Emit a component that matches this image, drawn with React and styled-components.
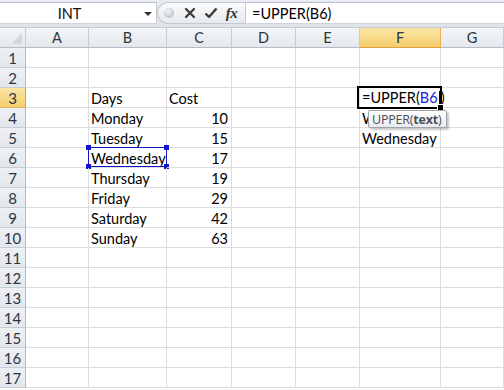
import React from "react";
import styled, { createGlobalStyle } from "styled-components";

const GlobalStyle = createGlobalStyle`
  html, body { margin: 0; padding: 0; background: #fff; overflow: hidden; }
  body { font-family: Lato, "Liberation Sans", sans-serif; }
`;

const Page = styled.div`
  width: 504px;
  height: 390px;
  overflow: hidden;
  background: #fff;
`;

const FormulaBar = styled.div`
  height: 28px;
  box-sizing: border-box;
  display: flex;
  align-items: flex-start;
  padding-top: 2px;
  background: linear-gradient(#e9ecf0, #dfe3e8);
  border-bottom: 1px solid #c6ccd4;
`;

const NameBox = styled.div`
  width: 157px;
  height: 22px;
  box-sizing: border-box;
  background: #fff;
  border-top: 1px solid #b8bfc8;
  border-bottom: 1px solid #d0d5db;
  border-right: 1px solid #c6ccd4;
  position: relative;
  display: flex;
  align-items: center;
  justify-content: center;
  padding-right: 17px;
  font-size: 14.5px;
  color: #111;
`;

const DropArrow = styled.span`
  position: absolute;
  right: 4px;
  top: 9px;
  width: 0;
  height: 0;
  border-left: 4px solid transparent;
  border-right: 4px solid transparent;
  border-top: 4px solid #333;
`;

const ButtonGroup = styled.div`
  width: 88px;
  height: 22px;
  box-sizing: border-box;
  display: flex;
  align-items: center;
  padding-right: 3px;
  border: 1px solid #c3c9d1;
  border-right: none;
  border-radius: 11px 0 0 11px;
  background: linear-gradient(#fafbfc, #e6e9ed);
`;

const IconSlot = styled.div`
  width: 21px;
  height: 20px;
  display: flex;
  align-items: center;
  justify-content: center;
`;

const Ball = styled.div`
  width: 10px;
  height: 10px;
  border-radius: 50%;
  background: radial-gradient(circle at 40% 35%, #f4f5f7, #c3c7cd 70%, #aeb3ba);
`;

const Fx = styled.span`
  font-family: "Liberation Serif", serif;
  font-style: italic;
  font-weight: bold;
  font-size: 15px;
  color: #333;
  letter-spacing: -0.5px;
`;

const FormulaInput = styled.div`
  flex: 1;
  height: 22px;
  box-sizing: border-box;
  background: #fff;
  border-top: 1px solid #b8bfc8;
  border-bottom: 1px solid #d0d5db;
  border-left: 1px solid #c3c9d1;
  display: flex;
  align-items: center;
  padding-left: 6px;
  font-size: 14.5px;
  color: #000;
`;

const Sheet = styled.div`
  display: grid;
  grid-template-columns: 26px 63px 78px 65px 64px 64px 81px 63px 1fr;
  grid-template-rows: 20px;
  grid-auto-rows: 20px;
`;

const Corner = styled.div`
  box-sizing: border-box;
  background: linear-gradient(#f3f5f7, #e4e8ec);
  border-right: 1px solid #c6ccd3;
  border-bottom: 1px solid #b5bcc5;
  position: relative;
  &::after {
    content: "";
    position: absolute;
    right: 3px;
    bottom: 3px;
    width: 0;
    height: 0;
    border-left: 11px solid transparent;
    border-bottom: 11px solid #d3d8de;
  }
`;

const ColHead = styled.div`
  box-sizing: border-box;
  display: flex;
  align-items: center;
  justify-content: center;
  font-size: 14.5px;
  color: #2c3642;
  border-right: 1px solid ${(p) => (p.$active ? "#e5b257" : "#c6ccd3")};
  border-bottom: 1px solid ${(p) => (p.$active ? "#e2a43a" : "#b5bcc5")};
  background: ${(p) =>
    p.$active
      ? "linear-gradient(#fbe6a6, #f5cd6b)"
      : "linear-gradient(#f3f5f7, #e4e8ec)"};
`;

const RowHead = styled.div`
  box-sizing: border-box;
  display: flex;
  align-items: center;
  justify-content: center;
  font-size: 15px;
  color: #2c3642;
  border-right: 1px solid ${(p) => (p.$active ? "#e2a43a" : "#b5bcc5")};
  border-bottom: 1px solid ${(p) => (p.$active ? "#e5b257" : "#c6ccd3")};
  background: ${(p) =>
    p.$active
      ? "linear-gradient(#fbe6a6, #f5cd6b)"
      : "linear-gradient(#eef1f4, #e3e7eb)"};
`;

const Cell = styled.div`
  box-sizing: border-box;
  position: relative;
  display: flex;
  align-items: center;
  justify-content: ${(p) => (p.$num ? "flex-end" : "flex-start")};
  padding: 1px 3px 0 2px;
  font-size: 14.5px;
  color: #000;
  white-space: nowrap;
  border-right: 1px solid #dadcdd;
  border-bottom: 1px solid #dadcdd;
  overflow: visible;
`;

const Selection = styled.div`
  position: absolute;
  left: -1px;
  top: -1px;
  right: -1px;
  bottom: 0px;
  border: 1px solid #1515c8;
  pointer-events: none;
`;

const Handle = styled.span`
  position: absolute;
  width: 5px;
  height: 5px;
  background: #1515c8;
  ${(p) => (p.$top ? "top: -3px;" : "bottom: -3px;")}
  ${(p) => (p.$left ? "left: -3px;" : "right: -3px;")}
`;

const EditBox = styled.div`
  position: absolute;
  left: -3px;
  top: -2px;
  right: -2px;
  bottom: -2px;
  border: 2px solid #000;
  pointer-events: none;
  z-index: 2;
`;

const FillHandle = styled.span`
  position: absolute;
  right: -4px;
  bottom: -4px;
  width: 5px;
  height: 5px;
  background: #000;
  border: 1px solid #fff;
`;

const Ref = styled.span`
  color: #2020e0;
`;

const Caret = styled.span`
  display: inline-block;
  width: 1px;
  height: 16px;
  background: #000;
  vertical-align: middle;
  margin: 0 1px 0 1px;
`;

const Tooltip = styled.div`
  position: absolute;
  left: 8px;
  top: 2px;
  height: 18px;
  box-sizing: border-box;
  padding: 0 5px 0 3px;
  display: flex;
  align-items: center;
  background: linear-gradient(#ffffff, #e9ebef);
  border: 1px solid #9ea3a9;
  border-radius: 2px;
  box-shadow: 2px 2px 2px rgba(0, 0, 0, 0.22);
  font-family: "Open Sans", "Noto Sans", sans-serif;
  font-size: 12.5px;
  letter-spacing: -0.2px;
  color: #4a4f55;
  z-index: 3;
  white-space: nowrap;
`;

const Bold = styled.b`
  font-weight: 700;
`;

const cols = ["A", "B", "C", "D", "E", "F", "G"];

const data = {
  3: { B: "Days", C: "Cost" },
  4: { B: "Monday", C: 10 },
  5: { B: "Tuesday", C: 15, F: "Wednesday" },
  6: { B: "Wednesday", C: 17 },
  7: { B: "Thursday", C: 19 },
  8: { B: "Friday", C: 29 },
  9: { B: "Saturday", C: 42 },
  10: { B: "Sunday", C: 63 },
};

function XIcon() {
  return (
    <svg width="12" height="12" viewBox="0 0 12 12">
      <path d="M2 2 L10 10 M10 2 L2 10" stroke="#3a3a3a" strokeWidth="2.2" strokeLinecap="round" />
    </svg>
  );
}

function CheckIcon() {
  return (
    <svg width="14" height="12" viewBox="0 0 14 12">
      <path d="M1.5 6.5 L5 10 L12.5 1.5" fill="none" stroke="#3a3a3a" strokeWidth="2.4" strokeLinejoin="round" />
    </svg>
  );
}

function renderCell(row, col) {
  if (row === 3 && col === "F") {
    return (
      <Cell key={col}>
        <span>
          =UPPER(<Ref>B6</Ref>
          <Caret />)
        </span>
        <EditBox>
          <FillHandle />
        </EditBox>
      </Cell>
    );
  }
  if (row === 4 && col === "F") {
    return (
      <Cell key={col}>
        W
        <Tooltip>
          UPPER(<Bold>text</Bold>)
        </Tooltip>
      </Cell>
    );
  }
  if (row === 6 && col === "B") {
    return (
      <Cell key={col}>
        Wednesday
        <Selection>
          <Handle $top $left />
          <Handle $top />
          <Handle $left />
          <Handle />
        </Selection>
      </Cell>
    );
  }
  const value = (data[row] || {})[col];
  return (
    <Cell key={col} $num={typeof value === "number"}>
      {value}
    </Cell>
  );
}

export default function App() {
  const rows = Array.from({ length: 17 }, (_, i) => i + 1);
  return (
    <Page>
      <GlobalStyle />
      <FormulaBar>
        <NameBox>
          INT
          <DropArrow />
        </NameBox>
        <ButtonGroup>
          <IconSlot>
            <Ball />
          </IconSlot>
          <IconSlot>
            <XIcon />
          </IconSlot>
          <IconSlot>
            <CheckIcon />
          </IconSlot>
          <IconSlot>
            <Fx>fx</Fx>
          </IconSlot>
        </ButtonGroup>
        <FormulaInput>=UPPER(B6)</FormulaInput>
      </FormulaBar>
      <Sheet>
        <Corner />
        {cols.map((c) => (
          <ColHead key={c} $active={c === "F"}>
            {c}
          </ColHead>
        ))}
        <ColHead />
        {rows.map((r) => (
          <React.Fragment key={r}>
            <RowHead $active={r === 3}>{r}</RowHead>
            {cols.map((c) => renderCell(r, c))}
            <Cell />
          </React.Fragment>
        ))}
      </Sheet>
    </Page>
  );
}
